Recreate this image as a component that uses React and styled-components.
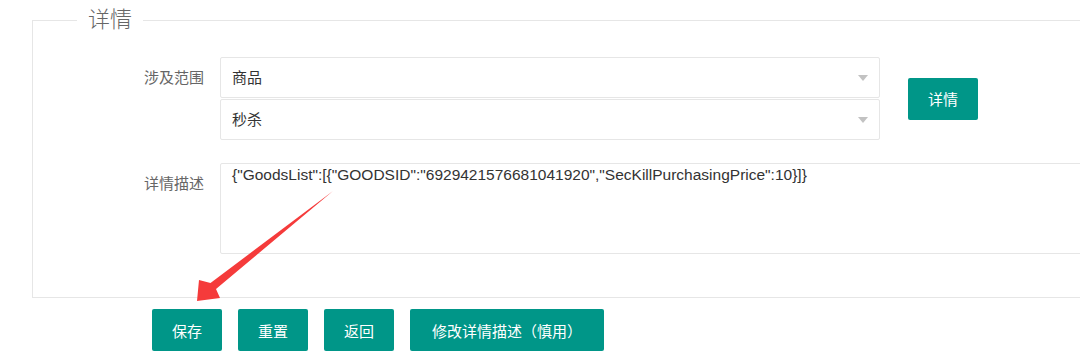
import React from 'react';
import styled, { createGlobalStyle } from 'styled-components';

const GlobalStyle = createGlobalStyle`
  html, body {
    margin: 0;
    padding: 0;
    background: #fff;
    overflow: hidden;
  }
  body {
    font-family: "Liberation Sans", "Noto Sans CJK SC", sans-serif;
    font-size: 15px;
    color: #333;
  }
`;

const Page = styled.div`
  position: relative;
  width: 1200px;
  height: 356px;
  padding: 5px 0 0 32px;
  box-sizing: border-box;
`;

const Fieldset = styled.fieldset`
  margin: 0;
  padding: 22px 0 43px;
  border: 1px solid #e6e6e6;
  width: 1120px;
  box-sizing: border-box;
`;

const Legend = styled.legend`
  margin-left: 44px;
  padding: 0 11px;
  font-size: 22px;
  line-height: 30px;
  font-weight: 300;
  color: #666;
`;

const FormItem = styled.div`
  display: flex;
  align-items: ${(p) => (p.$center ? 'center' : 'flex-start')};
  & + & {
    margin-top: 23px;
  }
`;

const Label = styled.label`
  flex: 0 0 187px;
  align-self: flex-start;
  box-sizing: border-box;
  padding-right: 16px;
  text-align: right;
  line-height: 41px;
  color: #666;
`;

const SelectGroup = styled.div`
  display: flex;
  flex-direction: column;
  gap: 1px;
  width: 660px;
`;

const Select = styled.div`
  position: relative;
  height: 41px;
  box-sizing: border-box;
  padding: 0 30px 0 11px;
  border: 1px solid #e6e6e6;
  border-radius: 2px;
  line-height: 39px;
  color: #333;
  &::after {
    content: '';
    position: absolute;
    right: 11px;
    top: 50%;
    margin-top: -3px;
    border-style: solid;
    border-width: 6px 5px 0;
    border-color: #c2c2c2 transparent transparent;
  }
`;

const Button = styled.button`
  height: 42px;
  padding: 0 ${(p) => (p.$wide ? '22px' : '20px')};
  margin-left: ${(p) => p.$offset || 0}px;
  border: none;
  border-radius: 2px;
  background: #009688;
  color: #fff;
  font-family: inherit;
  font-size: 15px;
  white-space: nowrap;
  cursor: pointer;
`;

const TextArea = styled.textarea`
  flex: 1;
  height: 91px;
  margin-right: 40px;
  box-sizing: border-box;
  padding: 1px 11px;
  border: 1px solid #e6e6e6;
  border-radius: 2px;
  resize: none;
  outline: none;
  font-family: "Liberation Sans", "Noto Sans CJK SC", sans-serif;
  font-size: 15.5px;
  line-height: 20px;
  color: #333;
`;

const ButtonRow = styled.div`
  display: flex;
  gap: 16px;
  margin: 11px 0 0 120px;
`;

const Arrow = styled.svg`
  position: absolute;
  left: 0;
  top: 0;
  pointer-events: none;
`;

const detail = '{"GoodsList":[{"GOODSID":"6929421576681041920","SecKillPurchasingPrice":10}]}';

export default function App() {
  return (
    <Page>
      <GlobalStyle />
      <Fieldset>
        <Legend>详情</Legend>
        <FormItem $center>
          <Label>涉及范围</Label>
          <SelectGroup>
            <Select>商品</Select>
            <Select>秒杀</Select>
          </SelectGroup>
          <Button $offset={28}>详情</Button>
        </FormItem>
        <FormItem>
          <Label>详情描述</Label>
          <TextArea readOnly value={detail} />
        </FormItem>
      </Fieldset>
      <ButtonRow>
        <Button>保存</Button>
        <Button>重置</Button>
        <Button>返回</Button>
        <Button $wide>修改详情描述（慎用）</Button>
      </ButtonRow>
      <Arrow width="1080" height="356" viewBox="0 0 1080 356">
        <polygon
          points="197,301 199,280 210.5,283 333,191 216,289 220,298"
          fill="#f53b3b"
        />
      </Arrow>
    </Page>
  );
}
